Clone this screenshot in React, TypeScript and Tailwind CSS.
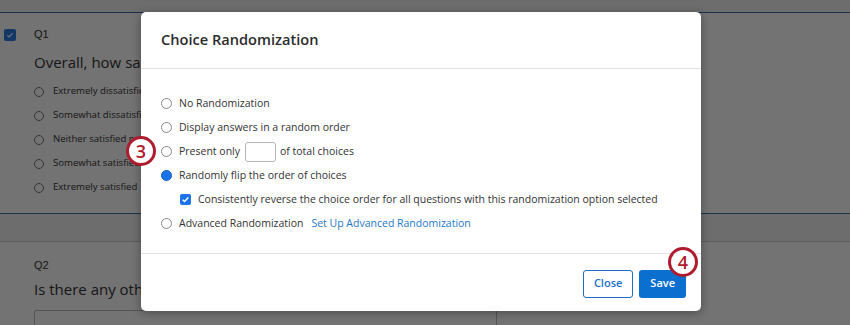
import React from 'react';

const q1Options = [
  'Extremely dissatisfied',
  'Somewhat dissatisfied',
  'Neither satisfied nor dissatisfied',
  'Somewhat satisfied',
  'Extremely satisfied',
];

const Radio: React.FC<{ checked?: boolean }> = ({ checked }) =>
  checked ? (
    <span className="w-[11px] h-[11px] rounded-full bg-[#1a73e8] border border-[#1562c7] shrink-0" />
  ) : (
    <span className="w-[11px] h-[11px] rounded-full border border-[#8a8a8a] bg-white shrink-0" />
  );

const Badge: React.FC<{ n: string; className: string }> = ({ n, className }) => (
  <div
    className={`absolute w-[30px] h-[30px] rounded-full border-[3px] border-[#b01b2e] bg-white flex items-center justify-center text-[#b01b2e] text-[18px] font-semibold leading-none ${className}`}
  >
    {n}
  </div>
);

const App: React.FC = () => {
  return (
    <div className="relative w-[850px] h-[325px] overflow-hidden bg-white font-['Open_Sans',sans-serif]">
      {/* survey editor underneath */}
      <div className="h-[12px] bg-[#f1f1f1]" />
      <div className="h-[202px] border-y border-[#3f6ea8] bg-white relative">
        <span className="absolute left-[4px] top-[16px] w-[12px] h-[12px] rounded-[2px] bg-[#2a7de0] flex items-center justify-center">
          <svg viewBox="0 0 12 12" className="w-[8px] h-[8px]">
            <path d="M2 6.5l2.5 2.5L10 3.5" stroke="white" strokeWidth="1.8" fill="none" />
          </svg>
        </span>
        <div className="pl-[34px] pt-[14px]">
          <div className="text-[11px] text-[#333] leading-[14px] font-['Liberation_Sans',sans-serif]">Q1</div>
          <div className="mt-[11px] text-[15px] text-[#333] leading-[20px]">
            Overall, how satisfied or dissatisfied are you with our company?
          </div>
          <div className="mt-[12px] flex flex-col gap-[9px]">
            {q1Options.map(o => (
              <div key={o} className="flex items-center gap-[9px] h-[15px]">
                <span className="w-[10px] h-[10px] rounded-full border border-[#777] bg-white" />
                <span className="text-[9.6px] text-[#333]">{o}</span>
              </div>
            ))}
          </div>
        </div>
      </div>
      <div className="h-[28px] bg-[#f1f1f1] border-b border-[#cfcfcf]" />
      <div className="pl-[34px] pt-[16px] bg-white">
        <div className="text-[11px] text-[#333] leading-[14px] font-['Liberation_Sans',sans-serif]">Q2</div>
        <div className="mt-[7px] text-[15px] text-[#333] leading-[20px]">
          Is there any other feedback you would like to share with us?
        </div>
        <div className="mt-[11px] w-[463px] h-[30px] border border-[#bdbdbd] rounded-[2px] bg-white" />
      </div>

      {/* dim overlay */}
      <div className="absolute inset-0 bg-black/55" />

      {/* modal */}
      <div className="absolute left-[141px] top-[12px] w-[560px] h-[299px] bg-white rounded-[5px] shadow-[0_2px_10px_rgba(0,0,0,0.35)] flex flex-col">
        <div className="h-[57px] border-b border-[#e3e3e3] flex items-center px-[20px]">
          <h2 className="text-[14.6px] font-semibold text-[#2b2b2b]">Choice Randomization</h2>
        </div>
        <div className="flex-1 px-[20px] pt-[27px] text-[10.5px] text-[#333]">
          <div className="flex flex-col gap-[9px]">
            <label className="flex items-center gap-[7px] h-[15px]">
              <Radio />
              <span>No Randomization</span>
            </label>
            <label className="flex items-center gap-[7px] h-[15px]">
              <Radio />
              <span>Display answers in a random order</span>
            </label>
            <label className="flex items-center gap-[7px] h-[15px]">
              <Radio />
              <span>Present only</span>
              <span className="w-[31px] h-[20px] border border-[#b5b5b5] rounded-[3px] ml-[-2px] mr-[-3px]" />
              <span>of total choices</span>
            </label>
            <label className="flex items-center gap-[7px] h-[15px]">
              <Radio checked />
              <span>Randomly flip the order of choices</span>
            </label>
            <label className="flex items-center gap-[7px] h-[15px] pl-[19px]">
              <span className="w-[11px] h-[11px] rounded-[2px] bg-[#1a73e8] flex items-center justify-center">
                <svg viewBox="0 0 12 12" className="w-[9px] h-[9px]">
                  <path d="M2.2 6.3l2.5 2.5L9.8 3.4" stroke="white" strokeWidth="1.9" fill="none" />
                </svg>
              </span>
              <span>Consistently reverse the choice order for all questions with this randomization option selected</span>
            </label>
            <label className="flex items-center gap-[7px] h-[15px]">
              <Radio />
              <span>Advanced Randomization</span>
              <a className="ml-[1px] text-[#1f78c8]">Set Up Advanced Randomization</a>
            </label>
          </div>
        </div>
        <div className="h-[58px] border-t border-[#e3e3e3] flex items-center justify-end gap-[6px] pr-[15px] pt-[2px]">
          <button className="h-[28px] px-[10px] border border-[#1b6fc9] rounded-[3px] text-[11px] font-semibold text-[#1b6fc9] bg-white">
            Close
          </button>
          <button className="h-[28px] px-[11px] rounded-[3px] text-[11px] font-semibold text-white bg-[#0b6fd0]">
            Save
          </button>
        </div>
      </div>

      <Badge n="3" className="left-[126px] top-[136px]" />
      <Badge n="4" className="left-[668px] top-[247px]" />
    </div>
  );
};

export default App;
